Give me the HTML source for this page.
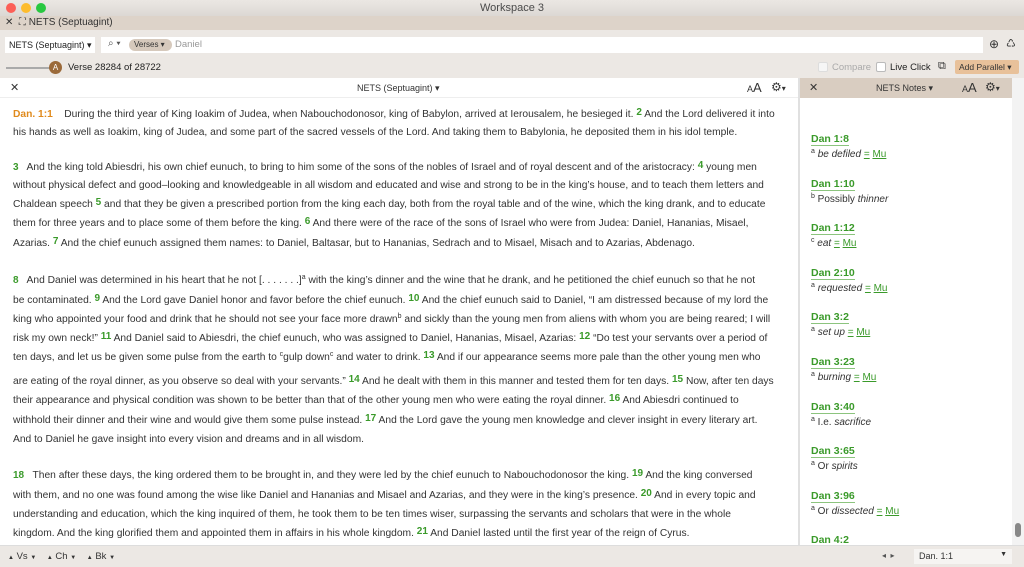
<!DOCTYPE html>
<html><head><meta charset="utf-8"><style>
*{margin:0;padding:0;box-sizing:border-box}
body{width:1024px;height:567px;overflow:hidden;font-family:"Liberation Sans",Arial,sans-serif;background:#ece8e4;position:relative;color:#333}
.a{position:absolute;white-space:nowrap}
.ln{position:absolute;left:13px;white-space:nowrap;font-size:10.25px;color:#333;line-height:12px;height:12px}
.v{color:#3a9a2a;font-weight:bold;font-size:10px;position:relative;top:-2px;line-height:0}
.nh{position:absolute;left:811px;color:#3a9a2a;font-weight:bold;font-size:10.5px;border-bottom:1px solid #8cc47e;line-height:12px}
.nt{position:absolute;left:811px;font-size:10px;color:#333;line-height:12px;height:12px}
.g{color:#3a9a2a;text-decoration:underline}
sup{font-size:7px;line-height:0;vertical-align:0;position:relative;top:-4px}
</style></head><body>
<div class="a" style="left:0;top:0;width:1024px;height:16px;background:linear-gradient(#ebe7e3,#dcd8d4);"></div>
<div class="a" style="left:6px;top:3px;width:10px;height:10px;border-radius:50%;background:#fc5f57"></div>
<div class="a" style="left:21px;top:3px;width:10px;height:10px;border-radius:50%;background:#fdbc2e"></div>
<div class="a" style="left:36px;top:3px;width:10px;height:10px;border-radius:50%;background:#28c840"></div>
<div class="a" style="left:0;width:1024px;top:2px;text-align:center;font-size:11px;color:#4a4a4a">Workspace 3</div>
<div class="a" style="left:0;top:16px;width:1024px;height:14px;background:#ddd3c9"></div>
<div class="a" style="left:5px;top:17px;font-size:10px;color:#333">✕ &nbsp;⛶ NETS (Septuagint)</div>
<div class="a" style="left:0;top:30px;width:1024px;height:29px;background:#ece8e4"></div>
<div class="a" style="left:5px;top:37px;width:90px;height:16px;background:#fff;font-size:9px;padding:3px 4px;color:#222">NETS (Septuagint) ▾</div>
<div class="a" style="left:101px;top:37px;width:882px;height:16px;background:#fff"></div>
<div class="a" style="left:108px;top:38px;font-size:10px;color:#555">⌕ ▾</div>
<div class="a" style="left:129px;top:39px;width:43px;height:12px;border-radius:6px;background:#d6c9bc;font-size:8px;padding:1px 5px;color:#333">Verses ▾</div>
<div class="a" style="left:175px;top:39px;font-size:9.5px;color:#999">Daniel</div>
<div class="a" style="left:989px;top:37px;font-size:12px;color:#333">⊕</div>
<div class="a" style="left:1006px;top:37px;font-size:11px;color:#333">♺</div>
<div class="a" style="left:6px;top:67px;width:45px;height:2px;background:#aaa"></div>
<div class="a" style="left:49px;top:61px;width:13px;height:13px;border-radius:50%;background:#9b6a3a;color:#fff;font-size:8px;text-align:center;line-height:13px">A</div>
<div class="a" style="left:68px;top:62px;font-size:9.5px;color:#222">Verse 28284 of 28722</div>
<div class="a" style="left:818px;top:62px;width:10px;height:10px;border:1px solid #ddd;background:#f6f6f6;border-radius:2px"></div>
<div class="a" style="left:832px;top:62px;font-size:9.5px;color:#aaa">Compare</div>
<div class="a" style="left:876px;top:62px;width:10px;height:10px;border:1px solid #bbb;background:#fff;border-radius:2px"></div>
<div class="a" style="left:890px;top:62px;font-size:9.5px;color:#222">Live Click</div>
<div class="a" style="left:938px;top:60px;font-size:11px;color:#333">⧉</div>
<div class="a" style="left:955px;top:60px;width:64px;height:14px;background:#e8c19a;border-radius:2px;font-size:8.5px;padding:2px 4px;color:#333">Add Parallel ▾</div>
<div class="a" style="left:0;top:78px;width:799px;height:467px;background:#fff"></div>
<div class="a" style="left:0;top:78px;width:799px;height:20px;background:#fff;border-bottom:1px solid #eee"></div>
<div class="a" style="left:10px;top:81px;font-size:11px;color:#333">✕</div>
<div class="a" style="left:357px;top:83px;font-size:9px;color:#333">NETS (Septuagint) ▾</div>
<div class="a" style="left:747px;top:80px;font-size:13px;color:#333"><span style="font-size:9px">A</span>A</div>
<div class="a" style="left:771px;top:80px;font-size:12px;color:#333">⚙<span style="font-size:8px">▾</span></div>
<div class="a" style="left:798px;top:78px;width:2px;height:467px;background:#e0e0e0"></div>

<div class="ln" style="top:109px"><span style="color:#e08a1c;font-weight:bold">Dan. 1:1</span> &nbsp;&nbsp; During the third year of King Ioakim of Judea, when Nabouchodonosor, king of Babylon, arrived at Ierousalem, he besieged it. <span class="v">2</span> And the Lord delivered it into</div>
<div class="ln" style="top:127px">his hands as well as Ioakim, king of Judea, and some part of the sacred vessels of the Lord. And taking them to Babylonia, he deposited them in his idol temple.</div>
<div class="ln" style="top:162px"><span class="v" style="top:0">3</span> &nbsp; And the king told Abiesdri, his own chief eunuch, to bring to him some of the sons of the nobles of Israel and of royal descent and of the aristocracy: <span class="v">4</span> young men</div>
<div class="ln" style="top:180px">without physical defect and good–looking and knowledgeable in all wisdom and educated and wise and strong to be in the king’s house, and to teach them letters and</div>
<div class="ln" style="top:199px">Chaldean speech <span class="v">5</span> and that they be given a prescribed portion from the king each day, both from the royal table and of the wine, which the king drank, and to educate</div>
<div class="ln" style="top:218px">them for three years and to place some of them before the king. <span class="v">6</span> And there were of the race of the sons of Israel who were from Judea: Daniel, Hananias, Misael,</div>
<div class="ln" style="top:238px">Azarias. <span class="v">7</span> And the chief eunuch assigned them names: to Daniel, Baltasar, but to Hananias, Sedrach and to Misael, Misach and to Azarias, Abdenago.</div>
<div class="ln" style="top:275px"><span class="v" style="top:0">8</span> &nbsp; And Daniel was determined in his heart that he not [. . . . . . .]<sup>a</sup> with the king’s dinner and the wine that he drank, and he petitioned the chief eunuch so that he not</div>
<div class="ln" style="top:295px">be contaminated. <span class="v">9</span> And the Lord gave Daniel honor and favor before the chief eunuch. <span class="v">10</span> And the chief eunuch said to Daniel, “I am distressed because of my lord the</div>
<div class="ln" style="top:314px">king who appointed your food and drink that he should not see your face more drawn<sup>b</sup> and sickly than the young men from aliens with whom you are being reared; I will</div>
<div class="ln" style="top:333px">risk my own neck!” <span class="v">11</span> And Daniel said to Abiesdri, the chief eunuch, who was assigned to Daniel, Hananias, Misael, Azarias: <span class="v">12</span> “Do test your servants over a period of</div>
<div class="ln" style="top:352px">ten days, and let us be given some pulse from the earth to <sup>c</sup>gulp down<sup>c</sup> and water to drink. <span class="v">13</span> And if our appearance seems more pale than the other young men who</div>
<div class="ln" style="top:376px">are eating of the royal dinner, as you observe so deal with your servants.” <span class="v">14</span> And he dealt with them in this manner and tested them for ten days. <span class="v">15</span> Now, after ten days</div>
<div class="ln" style="top:395px">their appearance and physical condition was shown to be better than that of the other young men who were eating the royal dinner. <span class="v">16</span> And Abiesdri continued to</div>
<div class="ln" style="top:415px">withhold their dinner and their wine and would give them some pulse instead. <span class="v">17</span> And the Lord gave the young men knowledge and clever insight in every literary art.</div>
<div class="ln" style="top:434px">And to Daniel he gave insight into every vision and dreams and in all wisdom.</div>
<div class="ln" style="top:470px"><span class="v" style="top:0">18</span> &nbsp; Then after these days, the king ordered them to be brought in, and they were led by the chief eunuch to Nabouchodonosor the king. <span class="v">19</span> And the king conversed</div>
<div class="ln" style="top:490px">with them, and no one was found among the wise like Daniel and Hananias and Misael and Azarias, and they were in the king’s presence. <span class="v">20</span> And in every topic and</div>
<div class="ln" style="top:509px">understanding and education, which the king inquired of them, he took them to be ten times wiser, surpassing the servants and scholars that were in the whole</div>
<div class="ln" style="top:528px">kingdom. And the king glorified them and appointed them in affairs in his whole kingdom. <span class="v">21</span> And Daniel lasted until the first year of the reign of Cyrus.</div>

<div class="a" style="left:800px;top:78px;width:212px;height:467px;background:#fff"></div>
<div class="a" style="left:800px;top:78px;width:212px;height:20px;background:#d9cdc1"></div>
<div class="a" style="left:809px;top:81px;font-size:11px;color:#333">✕</div>
<div class="a" style="left:876px;top:83px;font-size:9px;color:#333">NETS Notes ▾</div>
<div class="a" style="left:962px;top:80px;font-size:13px;color:#333"><span style="font-size:9px">A</span>A</div>
<div class="a" style="left:985px;top:80px;font-size:12px;color:#333">⚙<span style="font-size:8px">▾</span></div>
<div class="a" style="left:1012px;top:78px;width:12px;height:467px;background:#f3f3f3"></div>
<div class="a" style="left:1015px;top:523px;width:6px;height:14px;background:#888;border-radius:3px"></div>

<div class="nh" style="top:133px">Dan 1:8</div><div class="nt" style="top:149px"><sup>a</sup> <i>be defiled</i> <span class="g">=</span> <span class="g">Mu</span></div>
<div class="nh" style="top:178px">Dan 1:10</div><div class="nt" style="top:194px"><sup>b</sup> Possibly <i>thinner</i></div>
<div class="nh" style="top:222px">Dan 1:12</div><div class="nt" style="top:238px"><sup>c</sup> <i>eat</i> <span class="g">=</span> <span class="g">Mu</span></div>
<div class="nh" style="top:267px">Dan 2:10</div><div class="nt" style="top:283px"><sup>a</sup> <i>requested</i> <span class="g">=</span> <span class="g">Mu</span></div>
<div class="nh" style="top:311px">Dan 3:2</div><div class="nt" style="top:327px"><sup>a</sup> <i>set up</i> <span class="g">=</span> <span class="g">Mu</span></div>
<div class="nh" style="top:356px">Dan 3:23</div><div class="nt" style="top:372px"><sup>a</sup> <i>burning</i> <span class="g">=</span> <span class="g">Mu</span></div>
<div class="nh" style="top:401px">Dan 3:40</div><div class="nt" style="top:417px"><sup>a</sup> I.e. <i>sacrifice</i></div>
<div class="nh" style="top:445px">Dan 3:65</div><div class="nt" style="top:461px"><sup>a</sup> Or <i>spirits</i></div>
<div class="nh" style="top:490px">Dan 3:96</div><div class="nt" style="top:506px"><sup>a</sup> Or <i>dissected</i> <span class="g">=</span> <span class="g">Mu</span></div>
<div class="nh" style="top:534px">Dan 4:2</div>

<div class="a" style="left:0;top:545px;width:1024px;height:22px;background:#ece8e4;border-top:1px solid #ddd"></div>
<div class="a" style="left:8px;top:551px;font-size:9.5px;color:#333"><span style="font-size:6px">▲</span> Vs <span style="font-size:6px">▼</span> &nbsp;&nbsp; <span style="font-size:6px">▲</span> Ch <span style="font-size:6px">▼</span> &nbsp;&nbsp; <span style="font-size:6px">▲</span> Bk <span style="font-size:6px">▼</span></div>
<div class="a" style="left:882px;top:551px;font-size:8px;color:#555">◂ &nbsp;▸</div>
<div class="a" style="left:914px;top:549px;width:98px;height:15px;background:#f6f4f2;font-size:9px;padding:2px 5px;color:#333">Dan. 1:1<span style="float:right;font-size:7px">▼</span></div>
</body></html>
